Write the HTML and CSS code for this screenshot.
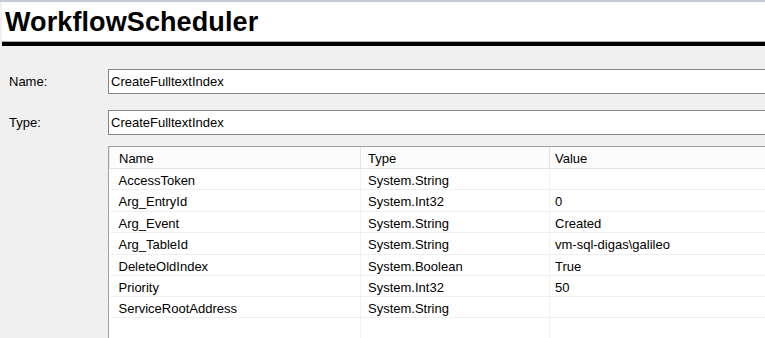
FILE: index.html
```html
<!DOCTYPE html>
<html>

<head>
    <title>WorkflowScheduler</title>
    <meta charset="utf-8">
    <link rel="stylesheet" href="styles.css">
</head>

<body>

    <div class="topline"></div>
    <header class="banner">
        <h1>WorkflowScheduler</h1>
    </header>

    <section class="form">
        <div class="field">
            <label>Name:</label>
            <div class="box">CreateFulltextIndex</div>
        </div>
        <div class="field type">
            <label>Type:</label>
            <div class="box">CreateFulltextIndex</div>
        </div>

        <div class="grid">
            <table>
                <colgroup>
                    <col class="c1">
                    <col class="c2">
                    <col>
                </colgroup>
                <thead>
                    <tr>
                        <th>Name</th>
                        <th>Type</th>
                        <th>Value</th>
                    </tr>
                </thead>
                <tbody>
                    <tr><td>AccessToken</td><td>System.String</td><td></td></tr>
                    <tr class="tall"><td>Arg_EntryId</td><td>System.Int32</td><td>0</td></tr>
                    <tr><td>Arg_Event</td><td>System.String</td><td>Created</td></tr>
                    <tr class="tall"><td>Arg_TableId</td><td>System.String</td><td>vm-sql-digas\galileo</td></tr>
                    <tr><td>DeleteOldIndex</td><td>System.Boolean</td><td>True</td></tr>
                    <tr><td>Priority</td><td>System.Int32</td><td>50</td></tr>
                    <tr><td>ServiceRootAddress</td><td>System.String</td><td></td></tr>
                    <tr class="rest"><td></td><td></td><td></td></tr>
                </tbody>
            </table>
        </div>
    </section>

</body>

</html>
```

FILE: styles.css
```css
html,
body {
    margin: 0;
    height: 100%;
    overflow: hidden;
}

body {
    background: #f0f0f0;
    font-family: "Liberation Sans", Arial, sans-serif;
    font-size: 13px;
    color: #000;
}

.topline {
    height: 2px;
    background: #c3ccd6;
}

.banner {
    margin-left: 2px;
    background: #ffffff;
    height: 39px;
    border-bottom: 1px solid #a9a9a9;
    box-shadow: 0 4px 0 #000;
    margin-bottom: 4px;
}

.banner h1 {
    margin: 0;
    padding: 5px 0 0 3px;
    font-size: 27px;
    line-height: 30px;
    font-weight: bold;
    letter-spacing: 0.1px;
}

.form {
    padding: 23px 0 0 9px;
}

.field {
    display: flex;
    align-items: center;
}

.field label {
    width: 99px;
    flex: none;
}

.field.type {
    margin-top: 16px;
}

.box {
    flex: none;
    width: 800px;
    height: 23px;
    line-height: 23px;
    padding-left: 2px;
    background: #fff;
    border: 1px solid #868686;
}

.grid {
    margin: 11px 0 0 99px;
    width: 800px;
    height: 300px;
    background: #fff;
    border: 1px solid #a0a0a0;
}

table {
    width: 100%;
    table-layout: fixed;
    border-collapse: collapse;
}

col.c1 {
    width: 251px;
}

col.c2 {
    width: 189px;
}

th {
    height: 21px;
    padding: 2px 0 0;
    box-sizing: border-box;
    text-align: left;
    font-weight: normal;
    background: #fcfcfc;
    border: 1px solid #e5e5e5;
    border-top: 0;
}

td {
    height: 21px;
    padding: 3px 0 0;
    box-sizing: border-box;
    border-bottom: 1px solid #f0f0f0;
    border-right: 1px solid #f0f0f0;
}

tr.tall td {
    height: 22px;
}

tr.rest td {
    height: 40px;
    border-bottom: 0;
}

th:nth-child(1),
td:nth-child(1) {
    padding-left: 9px;
}

th:nth-child(2),
td:nth-child(2) {
    padding-left: 7px;
}

th:nth-child(3),
td:nth-child(3) {
    padding-left: 5px;
}
```
